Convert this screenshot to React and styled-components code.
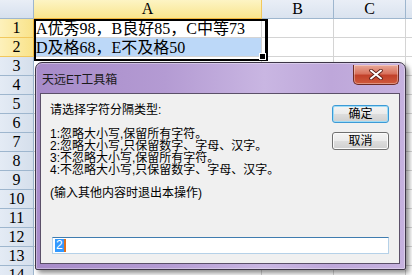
import React from 'react'
import styled, { createGlobalStyle } from 'styled-components'

const Global = createGlobalStyle`
  html, body { margin: 0; padding: 0; background: #fff; }
  body { width: 412px; height: 275px; overflow: hidden; }
`

const Sheet = styled.div`
  position: relative;
  width: 412px;
  height: 275px;
  overflow: hidden;
  font-family: "Liberation Serif", "Noto Sans CJK SC", serif;
`

const Grid = styled.div`
  display: grid;
  grid-template-columns: 34px 228px 72px 72px 72px;
  grid-auto-rows: 19px;
`

const Corner = styled.div`
  background: linear-gradient(#e9eef6, #d6e0ee);
  border-right: 1px solid #9eb6ce;
  border-bottom: 1px solid #9eb6ce;
`

const ColHead = styled.div`
  display: flex;
  align-items: center;
  justify-content: center;
  font-size: 16px;
  color: #000;
  border-right: 1px solid ${p => (p.$active ? '#f2c85d' : '#9eb6ce')};
  border-bottom: 1px solid ${p => (p.$active ? '#f2b63c' : '#9eb6ce')};
  background: ${p =>
    p.$active
      ? 'linear-gradient(#fdf4c4, #f9e58e)'
      : 'linear-gradient(#e9eef6, #dae3ef)'};
`

const RowHead = styled.div`
  display: flex;
  align-items: center;
  justify-content: center;
  font-size: 16px;
  color: #000;
  border-right: 1px solid ${p => (p.$active ? '#f2b63c' : '#9eb6ce')};
  border-bottom: 1px solid ${p => (p.$active ? '#f2c85d' : '#9eb6ce')};
  background: ${p =>
    p.$active
      ? 'linear-gradient(90deg, #fdf1bb, #f9e38a)'
      : 'linear-gradient(90deg, #e4ebf5, #d5dfec)'};
`

const Cell = styled.div`
  border-right: 1px solid #d4d4d4;
  border-bottom: 1px solid #d4d4d4;
  background: ${p => (p.$sel ? '#bcd8f8' : '#fff')};
  font-size: 16px;
  line-height: 19px;
  padding-left: 2px;
  white-space: nowrap;
  overflow: visible;
  color: #000;
`

const SelFrame = styled.div`
  position: absolute;
  left: 34px;
  top: 19px;
  width: 229px;
  height: 38px;
  border: 2px solid #000;
  border-right-width: 3px;
  pointer-events: none;
`

const FillHandle = styled.div`
  position: absolute;
  left: 259px;
  top: 53px;
  width: 5px;
  height: 5px;
  background: #000;
  border: 1px solid #fff;
`

const Window = styled.div`
  position: absolute;
  left: 35px;
  top: 62px;
  width: 371px;
  height: 208px;
  box-sizing: border-box;
  border: 1px solid #3d3547;
  border-radius: 7px 7px 2px 2px;
  background: linear-gradient(90deg, #a78bc9 0%, #b49bd3 35%, #c9b6e2 62%, #bea7da 80%, #c6b2df 100%);
  box-shadow: 3px 3px 5px rgba(0, 0, 0, 0.45), inset 0 0 0 1px rgba(255, 255, 255, 0.35);
  display: flex;
  flex-direction: column;
  font-family: "Liberation Sans", "Noto Sans CJK SC", sans-serif;
`

const TitleBar = styled.div`
  height: 30px;
  display: flex;
  align-items: flex-start;
  padding: 0 6px 0 6px;
`

const Title = styled.div`
  margin-top: 11px;
  font-size: 12px;
  line-height: 12px;
  color: #1b1b1b;
`

const CloseButton = styled.div`
  margin-left: auto;
  margin-top: 2px;
  width: 46px;
  height: 20px;
  box-sizing: border-box;
  border: 1px solid #6e2b24;
  border-top: none;
  border-radius: 0 0 5px 5px;
  background: linear-gradient(#e9a899 0%, #d9735e 45%, #c2412a 55%, #cf5a3c 100%);
  box-shadow: inset 0 0 0 1px rgba(255, 255, 255, 0.35);
  display: flex;
  align-items: center;
  justify-content: center;
`

const Client = styled.div`
  flex: 1;
  margin: 0 5px 5px 4px;
  border: 1px solid #5b5069;
  background: #f0f0f0;
  display: flex;
  flex-direction: column;
  padding: 10px 10px 9px 9px;
  font-size: 12px;
  color: #000;
`

const TopRow = styled.div`
  display: flex;
  justify-content: space-between;
`

const Texts = styled.div`
  display: flex;
  flex-direction: column;
`

const Prompt = styled.div`
  line-height: 12px;
  height: 12px;
`

const Options = styled.div`
  margin-top: 12px;
  line-height: 12px;
`

const Note = styled.div`
  margin-top: 11px;
  line-height: 12px;
`

const Buttons = styled.div`
  display: flex;
  flex-direction: column;
  gap: 9px;
  margin-top: 1px;
`

const Button = styled.div`
  width: 57px;
  height: 18px;
  box-sizing: border-box;
  border: 1px solid ${p => (p.$default ? '#3c9ad6' : '#707070')};
  border-radius: 3px;
  background: linear-gradient(#f4f4f4 0%, #ebebeb 48%, #dddddd 52%, #cfcfcf 100%);
  box-shadow: inset 0 0 0 1px ${p => (p.$default ? '#9fdcf6' : '#fbfbfb')};
  display: flex;
  align-items: center;
  justify-content: center;
  font-size: 12px;
  line-height: 12px;
`

const Input = styled.div`
  margin-top: auto;
  margin-left: 2px;
  width: 337px;
  height: 17px;
  box-sizing: border-box;
  background: #fff;
  border: 1px solid #b5d1e8;
  border-top-color: #3f7caf;
  display: flex;
  align-items: center;
  padding-left: 2px;
`

const Selected = styled.span`
  background: #3399ff;
  color: #fff;
  font-size: 12px;
  line-height: 13px;
  padding: 0 1px;
`

const Caret = styled.span`
  width: 2px;
  height: 13px;
  background: #e0701e;
`

const rows = [
  { n: 1, text: 'A优秀98，B良好85，C中等73' },
  { n: 2, text: 'D及格68，E不及格50', sel: true },
]

export default function App() {
  const all = []
  for (let i = 1; i <= 14; i++) {
    const r = rows.find(x => x.n === i)
    all.push(
      <React.Fragment key={i}>
        <RowHead $active={!!r}>{i}</RowHead>
        <Cell $sel={r && r.sel}>{r ? r.text : ''}</Cell>
        <Cell />
        <Cell />
        <Cell />
      </React.Fragment>
    )
  }

  return (
    <>
      <Global />
      <Sheet>
        <Grid>
          <Corner />
          <ColHead $active>A</ColHead>
          <ColHead>B</ColHead>
          <ColHead>C</ColHead>
          <ColHead />
          {all}
        </Grid>
        <SelFrame />
        <FillHandle />

        <Window>
          <TitleBar>
            <Title>天远ET工具箱</Title>
            <CloseButton>
              <svg width="14" height="11" viewBox="0 0 14 11">
                <path d="M2 1.5 L12 9.5 M12 1.5 L2 9.5" stroke="#5a1e16" strokeWidth="3.6" strokeLinecap="round" />
                <path d="M2 1.5 L12 9.5 M12 1.5 L2 9.5" stroke="#fff" strokeWidth="2" strokeLinecap="round" />
              </svg>
            </CloseButton>
          </TitleBar>
          <Client>
            <TopRow>
              <Texts>
                <Prompt>请选择字符分隔类型:</Prompt>
                <Options>
                  <div>1:忽略大小写,保留所有字符。</div>
                  <div>2:忽略大小写,只保留数字、字母、汉字。</div>
                  <div>3:不忽略大小写,保留所有字符。</div>
                  <div>4:不忽略大小写,只保留数字、字母、汉字。</div>
                </Options>
                <Note>(输入其他内容时退出本操作)</Note>
              </Texts>
              <Buttons>
                <Button $default>确定</Button>
                <Button>取消</Button>
              </Buttons>
            </TopRow>
            <Input>
              <Selected>2</Selected>
              <Caret />
            </Input>
          </Client>
        </Window>
      </Sheet>
    </>
  )
}
